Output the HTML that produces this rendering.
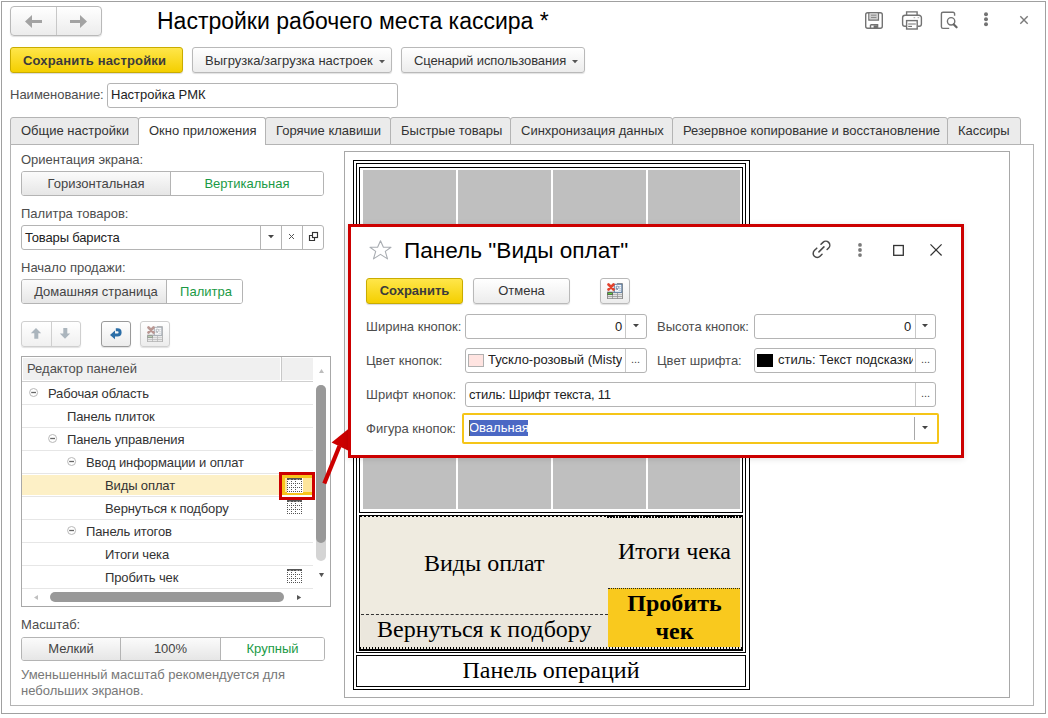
<!DOCTYPE html>
<html><head><meta charset="utf-8">
<style>
*{box-sizing:border-box;margin:0;padding:0}
html,body{width:1048px;height:718px;overflow:hidden;background:#fff}
body{position:relative;font-family:"Liberation Sans",sans-serif;font-size:13px;color:#333}
.a{position:absolute}
.t{position:absolute;white-space:nowrap;line-height:16px}
.btn{position:absolute;border:1px solid #b9b9b9;border-radius:3px;background:linear-gradient(#fff,#ececec);box-shadow:0 1px 1px rgba(0,0,0,.12);color:#333;text-align:center;white-space:nowrap}
.ybtn{position:absolute;border:1px solid #c9ac00;border-radius:3px;background:linear-gradient(#ffe64a,#f4cf00);box-shadow:0 1px 1px rgba(0,0,0,.15);color:#3b3b3b;font-weight:bold;text-align:center;white-space:nowrap}
.fld{position:absolute;border:1px solid #b4b4b4;border-radius:3px;background:#fff;white-space:nowrap;overflow:hidden}
.lbl{position:absolute;white-space:nowrap;color:#4d4d4d;line-height:16px}
.tab{position:absolute;top:117px;height:28px;border:1px solid #b4b4b4;border-radius:3px 3px 0 0;background:#ebebeb;line-height:25px;padding-left:10px;color:#333;white-space:nowrap}
.tog{position:absolute;border:1px solid #b4b4b4;border-radius:3px;overflow:hidden;display:flex}
.tog div{height:100%;text-align:center;white-space:nowrap;color:#444;background:linear-gradient(#fbfbfb,#e6e6e6)}
.tog div.on{background:#fff;color:#1a9a45}
.tog div+div{border-left:1px solid #b4b4b4}
.row{position:absolute;left:22px;width:291px;height:23px;border-bottom:1px solid #e6e6e6}
.row span{position:absolute;top:4px;white-space:nowrap;letter-spacing:-0.12px}
.minus{position:absolute;width:10px;height:10px;top:6px}.minus svg{display:block}
.blk{position:absolute;border:1px solid #000}
.tile{position:absolute;top:170px;height:339px;width:93px;background:#bfbfbf}
.serif{font-family:"Liberation Serif",serif;font-size:24px;color:#000;position:absolute;white-space:nowrap;line-height:28px}
</style></head><body>

<!-- window frame -->
<div class="a" style="left:1px;top:1px;width:1045px;height:713px;border:1px solid #a0a0a0"></div>

<!-- nav buttons -->
<div class="btn" style="left:10px;top:6px;width:92px;height:30px;border-radius:4px"></div>
<div class="a" style="left:56px;top:7px;width:1px;height:28px;background:#c8c8c8"></div>
<svg class="a" style="left:0;top:0" width="100" height="40"><path d="M25 21.5 L32 15 L32 20 L42 20 L42 23 L32 23 L32 28 Z" fill="#a3a3a3"/><path d="M87 21.5 L80 15 L80 20 L70 20 L70 23 L80 23 L80 28 Z" fill="#a3a3a3"/></svg>

<!-- title -->
<div class="t" style="left:157px;top:8px;font-size:23px;line-height:26px;color:#000">Настройки рабочего места кассира *</div>

<!-- toolbar -->
<div class="ybtn" style="left:10px;top:47px;width:173px;height:26px;line-height:25px;text-align:left;padding-left:12px;letter-spacing:0.15px">Сохранить настройки</div>
<div class="btn" style="left:192px;top:47px;width:200px;height:26px;line-height:25px;text-align:left;padding-left:12px">Выгрузка/загрузка настроек</div>
<svg class="a" style="left:379px;top:60px" width="6" height="4"><path d="M0 0 H6 L3 3.2 Z" fill="#555"/></svg>
<div class="btn" style="left:401px;top:47px;width:184px;height:26px;line-height:25px;text-align:left;padding-left:12px;letter-spacing:-0.1px">Сценарий использования</div>
<svg class="a" style="left:572px;top:60px" width="6" height="4"><path d="M0 0 H6 L3 3.2 Z" fill="#555"/></svg>

<!-- name -->
<div class="lbl" style="left:10px;top:87px">Наименование:</div>
<div class="fld" style="left:107px;top:83px;width:291px;height:25px;line-height:22px;padding-left:3px;color:#222">Настройка РМК</div>

<!-- tabs panel -->
<div class="a" style="left:10px;top:144px;width:1024px;height:562px;border:1px solid #b4b4b4"></div>
<div class="tab" style="left:10px;width:129px">Общие настройки</div>
<div class="tab" style="left:265px;width:126px">Горячие клавиши</div>
<div class="tab" style="left:390px;width:121px">Быстрые товары</div>
<div class="tab" style="left:510px;width:163px">Синхронизация данных</div>
<div class="tab" style="left:672px;width:276px">Резервное копирование и восстановление</div>
<div class="tab" style="left:947px;width:74px">Кассиры</div>
<div class="tab" style="left:138px;width:128px;background:#fff;border-bottom:none;height:28px">Окно приложения</div>

<!-- left column -->
<div class="lbl" style="left:21px;top:152px">Ориентация экрана:</div>
<div class="tog" style="left:21px;top:171px;width:303px;height:25px;line-height:23px">
  <div style="width:148px">Горизонтальная</div><div class="on" style="flex:1">Вертикальная</div>
</div>
<div class="lbl" style="left:21px;top:206px">Палитра товаров:</div>
<div class="fld" style="left:21px;top:225px;width:303px;height:25px;line-height:23px;padding-left:3px;color:#222;letter-spacing:-0.15px">Товары бариста</div>
<div class="a" style="left:260px;top:226px;width:1px;height:23px;background:#b4b4b4"></div>
<div class="a" style="left:281px;top:226px;width:1px;height:23px;background:#b4b4b4"></div>
<div class="a" style="left:302px;top:226px;width:1px;height:23px;background:#b4b4b4"></div>
<svg class="a" style="left:268px;top:235px" width="6" height="4"><path d="M0 0 H6 L3 3.2 Z" fill="#444"/></svg>
<svg class="a" style="left:288px;top:233px" width="7" height="7" stroke="#555" stroke-width="1"><path d="M1 1 L6 6 M6 1 L1 6"/></svg>
<svg class="a" style="left:308px;top:231px" width="11" height="11" fill="none" stroke="#333" stroke-width="1.15"><path d="M4.5 4.5 H1.5 V9.5 H6.5 V6.5"/><rect x="4.5" y="1.5" width="5" height="5"/></svg>

<div class="lbl" style="left:21px;top:260px">Начало продажи:</div>
<div class="tog" style="left:21px;top:279px;width:222px;height:25px;line-height:23px">
  <div style="width:144px;padding-left:4px">Домашняя страница</div><div class="on" style="flex:1;padding-left:3px">Палитра</div>
</div>

<!-- small buttons -->
<div class="btn" style="left:21px;top:321px;width:60px;height:26px;background:linear-gradient(#fff,#f0f0f0);border-color:#cfcfcf"></div>
<div class="a" style="left:51px;top:322px;width:1px;height:24px;background:#cfcfcf"></div>
<svg class="a" style="left:29px;top:327px" width="14" height="13"><path d="M7 1 L12.2 6.3 H9.3 V11.8 H5.3 V6.3 H1.8 Z" fill="#abb5bd"/></svg>
<svg class="a" style="left:58px;top:327px" width="14" height="13"><path d="M7 11.8 L12.2 6.5 H9.3 V1 H5.3 V6.5 H1.8 Z" fill="#abb5bd"/></svg>
<div class="btn" style="left:101px;top:321px;width:30px;height:26px;border-color:#9a9a9a"></div>
<svg class="a" style="left:101px;top:321px" width="30" height="26" viewBox="0 0 30 26"><path d="M13.5 14 H16.5 A2.6 2.6 0 0 0 16.5 8.8 H14.8" fill="none" stroke="#2b6ea7" stroke-width="3"/><path d="M9 14 L14 9.6 L14 18.2 Z" fill="#2b6ea7"/></svg>
<div class="btn" style="left:140px;top:321px;width:30px;height:26px;border-color:#cfcfcf"></div>
<svg class="a" style="left:147px;top:326px;opacity:0.6;filter:saturate(0.35)" width="16" height="16" viewBox="0 0 16 16">
<rect x="0" y="8.6" width="16" height="7.4" fill="#8e8e8e"/>
<path d="M10 0.5 H15.5 V9" fill="none" stroke="#8e8e8e" stroke-width="1"/>
<rect x="7.3" y="1.3" width="7.5" height="8" fill="#fff" stroke="#5d7fa6" stroke-width="1"/>
<path d="M9.2 7.2 V3.2 H10.8 A1.1 1.1 0 0 1 10.8 5.4 H9.4 L11.3 7.2" fill="none" stroke="#6a86a8" stroke-width="0.9"/>
<g fill="#6a86a8"><circle cx="13" cy="3.2" r="0.55"/><circle cx="13" cy="5.2" r="0.55"/><circle cx="13" cy="7.2" r="0.6"/></g>
<path d="M1.5 1.5 L6.5 6.5 M6.5 1.5 L1.5 6.5" stroke="#e2432f" stroke-width="2.6" stroke-linecap="round"/>
<g fill="#e4e4e4"><rect x="5.9" y="10" width="4.2" height="1.5"/><rect x="10.8" y="10" width="4.2" height="1.5"/><rect x="1" y="12" width="4.2" height="1.3"/><rect x="5.9" y="12" width="4.2" height="1.3"/><rect x="10.8" y="12" width="4.2" height="1.3"/><rect x="1" y="14" width="4.2" height="1.2"/><rect x="5.9" y="14" width="4.2" height="1.2"/><rect x="10.8" y="14" width="4.2" height="1.2"/></g>
<rect x="0.8" y="9.7" width="4.6" height="2" fill="#62d13f" stroke="#444" stroke-width="0.6"/>
</svg>

<!-- tree -->
<div class="a" style="left:21px;top:356px;width:310px;height:251px;border:1px solid #a8a8a8;background:#fff"></div>
<div class="a" style="left:23px;top:358px;width:257px;height:22px;background:#f0f0f0"></div>
<div class="a" style="left:282px;top:358px;width:31px;height:22px;background:#f0f0f0"></div>
<div class="a" style="left:281px;top:357px;width:1px;height:24px;background:#c8c8c8"></div>
<div class="a" style="left:22px;top:381px;width:291px;height:1px;background:#cfcfcf"></div>
<div class="lbl" style="left:27px;top:361px">Редактор панелей</div>
<svg class="a" style="left:319px;top:369px" width="5" height="4"><path d="M0 4 L2.5 0 L5 4 Z" fill="#bdbdbd"/></svg>

<div class="row" style="top:382px"><div class="minus" style="left:7px"><svg width="10" height="10"><circle cx="4.6" cy="4.5" r="4" fill="none" stroke="#b8b8b8" stroke-width="1"/><path d="M2.2 4.5H7" stroke="#666" stroke-width="1.3"/></svg></div><span style="left:26px">Рабочая область</span></div>
<div class="row" style="top:405px"><span style="left:45px">Панель плиток</span></div>
<div class="row" style="top:428px"><div class="minus" style="left:26px"><svg width="10" height="10"><circle cx="4.6" cy="4.5" r="4" fill="none" stroke="#b8b8b8" stroke-width="1"/><path d="M2.2 4.5H7" stroke="#666" stroke-width="1.3"/></svg></div><span style="left:45px">Панель управления</span></div>
<div class="row" style="top:451px"><div class="minus" style="left:45px"><svg width="10" height="10"><circle cx="4.6" cy="4.5" r="4" fill="none" stroke="#b8b8b8" stroke-width="1"/><path d="M2.2 4.5H7" stroke="#666" stroke-width="1.3"/></svg></div><span style="left:64px">Ввод информации и оплат</span></div>
<div class="a" style="left:22px;top:475px;width:291px;height:20px;background:#fdf0c6"></div>
<div class="row" style="top:474px"><span style="left:83px">Виды оплат</span></div>
<div class="row" style="top:497px"><span style="left:83px">Вернуться к подбору</span></div>
<div class="row" style="top:520px"><div class="minus" style="left:45px"><svg width="10" height="10"><circle cx="4.6" cy="4.5" r="4" fill="none" stroke="#b8b8b8" stroke-width="1"/><path d="M2.2 4.5H7" stroke="#666" stroke-width="1.3"/></svg></div><span style="left:64px">Панель итогов</span></div>
<div class="row" style="top:543px"><span style="left:83px">Итоги чека</span></div>
<div class="row" style="top:566px"><span style="left:83px">Пробить чек</span></div>
<svg class="a" style="left:287px;top:500px" width="16" height="15" shape-rendering="crispEdges"><rect x="0" y="0" width="15.4" height="2.4" fill="#555"/><path d="M2 1.5h1.5M5.5 1.5h1.5M9 1.5h1.5M12 1.5h1" stroke="#aaa" stroke-width="0.8"/><path d="M0 3h1v1h-1zM4 3h1v1h-1zM8 3h1v1h-1zM14 3h1v1h-1zM0 7h1v1h-1zM4 7h1v1h-1zM8 7h1v1h-1zM14 7h1v1h-1zM0 11h1v1h-1zM4 11h1v1h-1zM8 11h1v1h-1zM14 11h1v1h-1zM0 5h1v1h-1zM2 5h1v1h-1zM4 5h1v1h-1zM6 5h1v1h-1zM8 5h1v1h-1zM10 5h1v1h-1zM12 5h1v1h-1zM14 5h1v1h-1zM0 9h1v1h-1zM2 9h1v1h-1zM4 9h1v1h-1zM6 9h1v1h-1zM8 9h1v1h-1zM10 9h1v1h-1zM12 9h1v1h-1zM14 9h1v1h-1zM0 13h1v1h-1zM2 13h1v1h-1zM4 13h1v1h-1zM6 13h1v1h-1zM8 13h1v1h-1zM10 13h1v1h-1zM12 13h1v1h-1zM14 13h1v1h-1z" fill="#555"/></svg><svg class="a" style="left:287px;top:569px" width="16" height="15" shape-rendering="crispEdges"><rect x="0" y="0" width="15.4" height="2.4" fill="#555"/><path d="M2 1.5h1.5M5.5 1.5h1.5M9 1.5h1.5M12 1.5h1" stroke="#aaa" stroke-width="0.8"/><path d="M0 3h1v1h-1zM4 3h1v1h-1zM8 3h1v1h-1zM14 3h1v1h-1zM0 7h1v1h-1zM4 7h1v1h-1zM8 7h1v1h-1zM14 7h1v1h-1zM0 11h1v1h-1zM4 11h1v1h-1zM8 11h1v1h-1zM14 11h1v1h-1zM0 5h1v1h-1zM2 5h1v1h-1zM4 5h1v1h-1zM6 5h1v1h-1zM8 5h1v1h-1zM10 5h1v1h-1zM12 5h1v1h-1zM14 5h1v1h-1zM0 9h1v1h-1zM2 9h1v1h-1zM4 9h1v1h-1zM6 9h1v1h-1zM8 9h1v1h-1zM10 9h1v1h-1zM12 9h1v1h-1zM14 9h1v1h-1zM0 13h1v1h-1zM2 13h1v1h-1zM4 13h1v1h-1zM6 13h1v1h-1zM8 13h1v1h-1zM10 13h1v1h-1zM12 13h1v1h-1zM14 13h1v1h-1z" fill="#555"/></svg>
<!-- red highlight on tree icon -->
<div class="a" style="left:279px;top:472px;width:36px;height:28px;border:3px solid #cc0000;background:#fff"></div>
<div class="a" style="left:282px;top:475px;width:30px;height:20px;background:#fde59c;border-top:3px solid #f8c51c;border-left:3px solid #f8c51c;border-bottom:3px solid #f8c51c"></div>
<svg class="a" style="left:287px;top:478px" width="16" height="15" shape-rendering="crispEdges"><rect x="0" y="0" width="16" height="15" fill="#fff"/><rect x="0" y="0" width="15.4" height="2.4" fill="#555"/><path d="M2 1.5h1.5M5.5 1.5h1.5M9 1.5h1.5M12 1.5h1" stroke="#aaa" stroke-width="0.8"/><path d="M0 3h1v1h-1zM4 3h1v1h-1zM8 3h1v1h-1zM14 3h1v1h-1zM0 7h1v1h-1zM4 7h1v1h-1zM8 7h1v1h-1zM14 7h1v1h-1zM0 11h1v1h-1zM4 11h1v1h-1zM8 11h1v1h-1zM14 11h1v1h-1zM0 5h1v1h-1zM2 5h1v1h-1zM4 5h1v1h-1zM6 5h1v1h-1zM8 5h1v1h-1zM10 5h1v1h-1zM12 5h1v1h-1zM14 5h1v1h-1zM0 9h1v1h-1zM2 9h1v1h-1zM4 9h1v1h-1zM6 9h1v1h-1zM8 9h1v1h-1zM10 9h1v1h-1zM12 9h1v1h-1zM14 9h1v1h-1zM0 13h1v1h-1zM2 13h1v1h-1zM4 13h1v1h-1zM6 13h1v1h-1zM8 13h1v1h-1zM10 13h1v1h-1zM12 13h1v1h-1zM14 13h1v1h-1z" fill="#555"/></svg>
<!-- scrollbars -->
<div class="a" style="left:316px;top:385px;width:10px;height:176px;border-radius:5px;background:#d4d4d4"></div>
<div class="a" style="left:316px;top:385px;width:10px;height:158px;border-radius:5px;background:#999"></div>
<svg class="a" style="left:319px;top:573px" width="5" height="5"><path d="M0 0 L5 0 L2.5 4.2 Z" fill="#555"/></svg>
<svg class="a" style="left:34px;top:595px" width="5" height="5"><path d="M4 0 V5 L0 2.5 Z" fill="#c0c0c0"/></svg>
<div class="a" style="left:50px;top:592px;width:234px;height:10px;border-radius:5px;background:#999"></div>
<svg class="a" style="left:297px;top:595px" width="5" height="5"><path d="M0 0 V5 L4.2 2.5 Z" fill="#555"/></svg>

<!-- scale -->
<div class="lbl" style="left:21px;top:617px">Масштаб:</div>
<div class="tog" style="left:21px;top:637px;width:304px;height:24px;line-height:22px">
  <div style="width:98px">Мелкий</div><div style="width:100px">100%</div><div class="on" style="flex:1">Крупный</div>
</div>
<div class="lbl" style="left:21px;top:667px;color:#787878;line-height:16px">Уменьшенный масштаб рекомендуется для<br>небольших экранов.</div>

<!-- preview -->
<div class="a" style="left:344px;top:151px;width:666px;height:547px;border:1px solid #a8a8a8"></div>
<div class="blk" style="left:353px;top:160px;width:397px;height:530px"></div>
<div class="blk" style="left:356px;top:163px;width:390px;height:490px"></div>
<div class="blk" style="left:359px;top:167px;width:384px;height:346px"></div>
<div class="tile" style="left:363px"></div>
<div class="tile" style="left:458px"></div>
<div class="tile" style="left:553px"></div>
<div class="tile" style="left:648px;width:92px"></div>
<!-- control panel -->
<div class="a" style="left:359px;top:515px;width:384px;height:136px;border:1px solid #000;border-bottom-width:2px;background:#efebe0"></div>
<div class="a" style="left:360px;top:516px;width:382px;height:1px;background:repeating-linear-gradient(90deg,#000 0 2px,transparent 2px 4px)"></div><div class="a" style="left:607px;top:516px;width:135px;height:2px;background:repeating-linear-gradient(90deg,#000 0 2px,transparent 2px 3px)"></div>
<div class="a" style="left:361px;top:614px;width:247px;height:33px;background:#ebe7dd;border-top:1px dashed #333"></div>
<div class="a" style="left:608px;top:588px;width:132px;height:59px;background:#f9c91e;border-top:1px dotted #222"></div>
<div class="a" style="left:360px;top:647px;width:382px;height:2px;background:repeating-linear-gradient(90deg,#000 0 1px,transparent 1px 3px)"></div>
<div class="serif" style="left:424px;top:549px">Виды оплат</div>
<div class="serif" style="left:377px;top:615px">Вернуться к подбору</div>
<div class="serif" style="left:618px;top:537px">Итоги чека</div>
<div class="serif" style="left:608px;top:589px;width:133px;text-align:center;font-weight:bold;line-height:28px">Пробить<br>чек</div>
<!-- operations panel -->
<div class="blk" style="left:356px;top:655px;width:390px;height:32px"></div>
<div class="serif" style="left:356px;top:656px;width:390px;text-align:center">Панель операций</div>

<!-- arrow -->
<svg class="a" style="left:315px;top:420px" width="40" height="70"><path d="M9.3 63.5 L24.5 26" stroke="#cc0000" stroke-width="4.2"/><path d="M16.6 22.6 L33 9.3 L33 30.6 Z" fill="#cc0000"/></svg>

<!-- dialog -->
<div class="a" style="left:348px;top:224px;width:616px;height:234px;border:3px solid #cc0000;background:#fff;box-shadow:0 1px 6px rgba(0,0,0,.12)"></div>
<div class="t" style="left:404px;top:238px;font-size:22.6px;line-height:26px;color:#000">Панель "Виды оплат"</div>
<div class="ybtn" style="left:366px;top:278px;width:97px;height:26px;line-height:24px">Сохранить</div>
<div class="btn" style="left:473px;top:278px;width:97px;height:26px;line-height:24px">Отмена</div>
<div class="btn" style="left:600px;top:278px;width:30px;height:26px"></div>
<svg class="a" style="left:607px;top:283px;opacity:1.0" width="16" height="16" viewBox="0 0 16 16">
<rect x="0" y="8.6" width="16" height="7.4" fill="#8e8e8e"/>
<path d="M10 0.5 H15.5 V9" fill="none" stroke="#8e8e8e" stroke-width="1"/>
<rect x="7.3" y="1.3" width="7.5" height="8" fill="#fff" stroke="#5d7fa6" stroke-width="1"/>
<path d="M9.2 7.2 V3.2 H10.8 A1.1 1.1 0 0 1 10.8 5.4 H9.4 L11.3 7.2" fill="none" stroke="#6a86a8" stroke-width="0.9"/>
<g fill="#6a86a8"><circle cx="13" cy="3.2" r="0.55"/><circle cx="13" cy="5.2" r="0.55"/><circle cx="13" cy="7.2" r="0.6"/></g>
<path d="M1.5 1.5 L6.5 6.5 M6.5 1.5 L1.5 6.5" stroke="#e2432f" stroke-width="2.6" stroke-linecap="round"/>
<g fill="#e4e4e4"><rect x="5.9" y="10" width="4.2" height="1.5"/><rect x="10.8" y="10" width="4.2" height="1.5"/><rect x="1" y="12" width="4.2" height="1.3"/><rect x="5.9" y="12" width="4.2" height="1.3"/><rect x="10.8" y="12" width="4.2" height="1.3"/><rect x="1" y="14" width="4.2" height="1.2"/><rect x="5.9" y="14" width="4.2" height="1.2"/><rect x="10.8" y="14" width="4.2" height="1.2"/></g>
<rect x="0.8" y="9.7" width="4.6" height="2" fill="#62d13f" stroke="#444" stroke-width="0.6"/>
</svg>

<div class="lbl" style="left:366px;top:319px">Ширина кнопок:</div>
<div class="fld" style="left:465px;top:314px;width:182px;height:25px"></div>
<div class="a" style="left:625px;top:315px;width:1px;height:23px;background:#c8c8c8"></div>
<div class="t" style="left:615px;top:319px;color:#222">0</div>
<svg class="a" style="left:633px;top:324px" width="6" height="4"><path d="M0 0 H6 L3 3.2 Z" fill="#444"/></svg>
<div class="lbl" style="left:657px;top:319px">Высота кнопок:</div>
<div class="fld" style="left:754px;top:314px;width:182px;height:25px"></div>
<div class="a" style="left:915px;top:315px;width:1px;height:23px;background:#c8c8c8"></div>
<div class="t" style="left:904px;top:319px;color:#222">0</div>
<svg class="a" style="left:922px;top:324px" width="6" height="4"><path d="M0 0 H6 L3 3.2 Z" fill="#444"/></svg>

<div class="lbl" style="left:366px;top:353px">Цвет кнопок:</div>
<div class="fld" style="left:465px;top:348px;width:182px;height:25px"></div>
<div class="a" style="left:468px;top:354px;width:16px;height:13px;background:#ffe4e1;border:1px solid #b0b0b0"></div>
<div class="a" style="left:488px;top:352px;width:134px;overflow:hidden;white-space:nowrap;line-height:16px;color:#222">Тускло-розовый (MistyRose)</div>
<div class="a" style="left:625px;top:349px;width:1px;height:23px;background:#c8c8c8"></div>
<div class="t" style="left:631px;top:351px;color:#444;font-size:11px">...</div>
<div class="lbl" style="left:657px;top:353px">Цвет шрифта:</div>
<div class="fld" style="left:754px;top:348px;width:182px;height:25px"></div>
<div class="a" style="left:757px;top:354px;width:16px;height:13px;background:#000"></div>
<div class="a" style="left:778px;top:352px;width:135px;overflow:hidden;white-space:nowrap;line-height:16px;color:#222">стиль: Текст подсказки</div>
<div class="a" style="left:915px;top:349px;width:1px;height:23px;background:#c8c8c8"></div>
<div class="t" style="left:921px;top:351px;color:#444;font-size:11px">...</div>

<div class="lbl" style="left:366px;top:387px">Шрифт кнопок:</div>
<div class="fld" style="left:465px;top:382px;width:471px;height:25px;line-height:23px;padding-left:3px;color:#222;letter-spacing:-0.22px">стиль: Шрифт текста, 11</div>
<div class="a" style="left:915px;top:383px;width:1px;height:23px;background:#c8c8c8"></div>
<div class="t" style="left:921px;top:385px;color:#444;font-size:11px">...</div>

<div class="lbl" style="left:366px;top:421px">Фигура кнопок:</div>
<div class="a" style="left:462px;top:413px;width:477px;height:31px;border:2px solid #f5c518;border-radius:2px;background:#fff"></div>
<div class="a" style="left:469px;top:420px;width:59px;height:16px;background:#4b68c4"></div>
<div class="t" style="left:469px;top:420px;color:#fff">Овальная</div><div class="a" style="left:469px;top:420px;width:1px;height:16px;background:#6b5a20"></div>
<div class="a" style="left:914px;top:417px;width:1px;height:23px;background:#a8a8a8"></div>
<svg class="a" style="left:922px;top:426px" width="6" height="4"><path d="M0 0 H6 L3 3.2 Z" fill="#444"/></svg>


<!-- icon overlay -->
<svg class="a" style="left:0;top:0;pointer-events:none" width="1048" height="718" viewBox="0 0 1048 718">
<!-- floppy -->
<g fill="none" stroke="#737373" stroke-width="1.4">
<rect x="865.7" y="12.7" width="16.6" height="15.6" rx="2"/>
<path d="M868.9 12.7 V20 H878.4 V12.7"/>
<path d="M870.5 24.7 V28.3 M870.5 24.7 H877.6 V28.3"/>
</g>
<rect x="869.6" y="13.4" width="8.1" height="5.9" fill="#cfcfcf"/>
<path d="M871 15.2 H876.4 M871 17.5 H876.4" stroke="#8a8a8a" stroke-width="1"/>
<rect x="873.6" y="25.4" width="3.4" height="3" fill="#6e6e6e"/>
<!-- printer -->
<g fill="none" stroke="#737373" stroke-width="1.4">
<path d="M906.6 15 V11.9 H917.1 V15"/>
<path d="M906 26.3 H904.8 A2.2 2.2 0 0 1 902.6 24.1 V17.7 A2.5 2.5 0 0 1 905.1 15.2 H918.9 A2.5 2.5 0 0 1 921.4 17.7 V24.1 A2.2 2.2 0 0 1 919.2 26.3 H918"/>
<rect x="906.6" y="20.6" width="10.6" height="8.4" fill="#fff"/>
</g>
<path d="M908.2 24 H915.8" stroke="#8a8a8a" stroke-width="1.2"/>
<path d="M908.2 26.4 H912" stroke="#6a6a6a" stroke-width="1.1"/>
<path d="M913.6 17.7 H915.2 M917.6 17.7 H919.2" stroke="#a8a8a8" stroke-width="1"/>
<!-- preview -->
<g fill="none" stroke="#737373" stroke-width="1.4">
<path d="M949.2 28.4 H943 A1.6 1.6 0 0 1 941.4 26.8 V13.8 A1.6 1.6 0 0 1 943 12.2 H953 A1.6 1.6 0 0 1 954.6 13.8 V15.8"/>
<circle cx="951.1" cy="21.3" r="3.7"/>
</g>
<path d="M953.8 24.4 L956.6 27.3" stroke="#666" stroke-width="2.2" stroke-linecap="round"/>
<!-- window dots -->
<g fill="#737373"><circle cx="986" cy="14.3" r="2"/><circle cx="986" cy="19.3" r="2"/><circle cx="986" cy="24.3" r="2"/></g>
<path d="M1020.3 16.3 L1027.7 23.7 M1027.7 16.3 L1020.3 23.7" stroke="#7a7a7a" stroke-width="1.4"/>

<!-- dialog star -->
<path d="M380.5 240.8 L383.4 247.3 L391 247.3 L385.3 251.4 L387.5 258.9 L380.5 254.4 L373.5 258.9 L375.7 251.4 L370 247.3 L377.6 247.3 Z" fill="none" stroke="#a9adb2" stroke-width="1.1" stroke-linejoin="round"/>
<!-- link -->
<g fill="none" stroke="#4a4a4a" stroke-width="1.5" stroke-linecap="round">
<path d="M821 244.3 L822.97 242.37 A4 4 0 0 1 828.63 248.03 L827.1 249.56"/>
<path d="M816.77 248.17 L814.37 250.57 A4 4 0 0 0 820.03 256.23 L822.03 254.23"/>
<path d="M818.9 251.9 L823.9 246.9"/>
</g>
<g fill="#7a7a7a"><circle cx="860" cy="244.9" r="1.9"/><circle cx="860" cy="250" r="1.9"/><circle cx="860" cy="255.1" r="1.9"/></g>
<rect x="893.7" y="245.5" width="9.6" height="9.8" fill="none" stroke="#333" stroke-width="1.3"/>
<path d="M930.5 244.4 L941.6 255.5 M941.6 244.4 L930.5 255.5" stroke="#333" stroke-width="1.2"/>
</svg>
</body></html>
